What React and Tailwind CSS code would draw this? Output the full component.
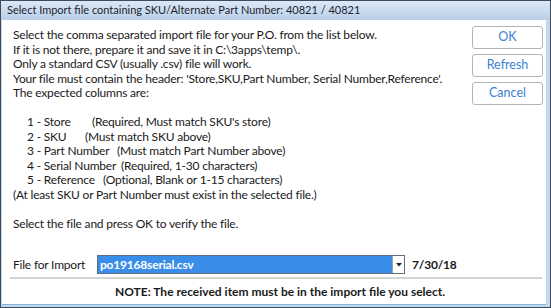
export default function App() {
  const rows = [
    ["1 - Store", "(Required, Must match SKU's store)", "w-[65px]"],
    ["2 - SKU", "(Must match SKU above)", "w-[58px]"],
    ["3 - Part Number", "(Must match Part Number above)", "w-[90px]"],
    ["4 - Serial Number", "(Required, 1-30 characters)", "w-[94px]"],
    ["5 - Reference", "(Optional, Blank or 1-15 characters)", "w-[76px]"],
  ];

  return (
    <div className="w-[551px] h-[308px] bg-[#c3d8ee] border border-[#3e4b5a] flex flex-col font-['Lato','Open_Sans',sans-serif] text-[12px] text-[#1a1a1a]">
      <div className="h-[19px] shrink-0 bg-gradient-to-b from-[#dbe8f6] to-[#b9cfe8] flex items-center pl-[6px] text-[11px] text-[#1e2430]">
        Select Import file containing SKU/Alternate Part Number: 40821 / 40821
      </div>

      <div className="flex-1 bg-white ml-[1px] mr-[4px] mb-[2px] flex flex-col border-b border-[#7fb9d9] tracking-[-0.2px]">
        <div className="flex">
          <div className="flex-1 pl-[11px] pt-[8px] leading-[14.5px]">
            <div>Select the comma separated import file for your P.O. from the list below.</div>
            <div>If it is not there, prepare it and save it in C:\3apps\temp\.</div>
            <div>Only a standard CSV (usually .csv) file will work.</div>
            <div>Your file must contain the header: 'Store,SKU,Part Number, Serial Number,Reference'.</div>
            <div>The expected columns are:</div>
            <div className="h-[14.5px]" />
            {rows.map(([label, desc, w]) => (
              <div key={label} className="pl-[14px] flex">
                <span className={`${w} shrink-0`}>{label}</span>
                <span>{desc}</span>
              </div>
            ))}
            <div>(At least SKU or Part Number must exist in the selected file.)</div>
            <div className="h-[14.5px]" />
            <div>Select the file and press OK to verify the file.</div>
          </div>

          <div className="flex flex-col gap-[5px] pt-[6px] pr-[3px]">
            {["OK", "Refresh", "Cancel"].map((b) => (
              <button
                key={b}
                className="w-[71px] h-[23px] rounded-[3px] border border-[#b4b4b4] bg-white text-[#3a7fd4] text-[12.5px] tracking-normal"
              >
                {b}
              </button>
            ))}
          </div>
        </div>

        <div className="flex items-center mt-[24px] pl-[11px]">
          <span className="w-[84px]">File for Import</span>
          <div className="w-[308px] h-[19px] border border-[#5f6d7c] flex">
            <div className="flex-1 bg-[#3a8eea] text-white font-bold pl-[2px] flex items-center">
              po19168serial.csv
            </div>
            <div className="w-[12px] bg-white border-l border-[#9aa4ae] flex items-center justify-center">
              <svg width="6" height="4" viewBox="0 0 6 4">
                <path d="M0 0h6L3 3.5z" fill="#222" />
              </svg>
            </div>
          </div>
          <span className="ml-[7px] font-bold">7/30/18</span>
        </div>

        <div className="mt-[3px] ml-[8px] mr-[4px] h-[2px] bg-[#d3d3d3]" />

        <div className="mt-[6px] pl-[12px] text-center font-bold leading-[14.5px] tracking-normal">
          NOTE: The received item must be in the import file you select.
        </div>
      </div>
    </div>
  );
}
